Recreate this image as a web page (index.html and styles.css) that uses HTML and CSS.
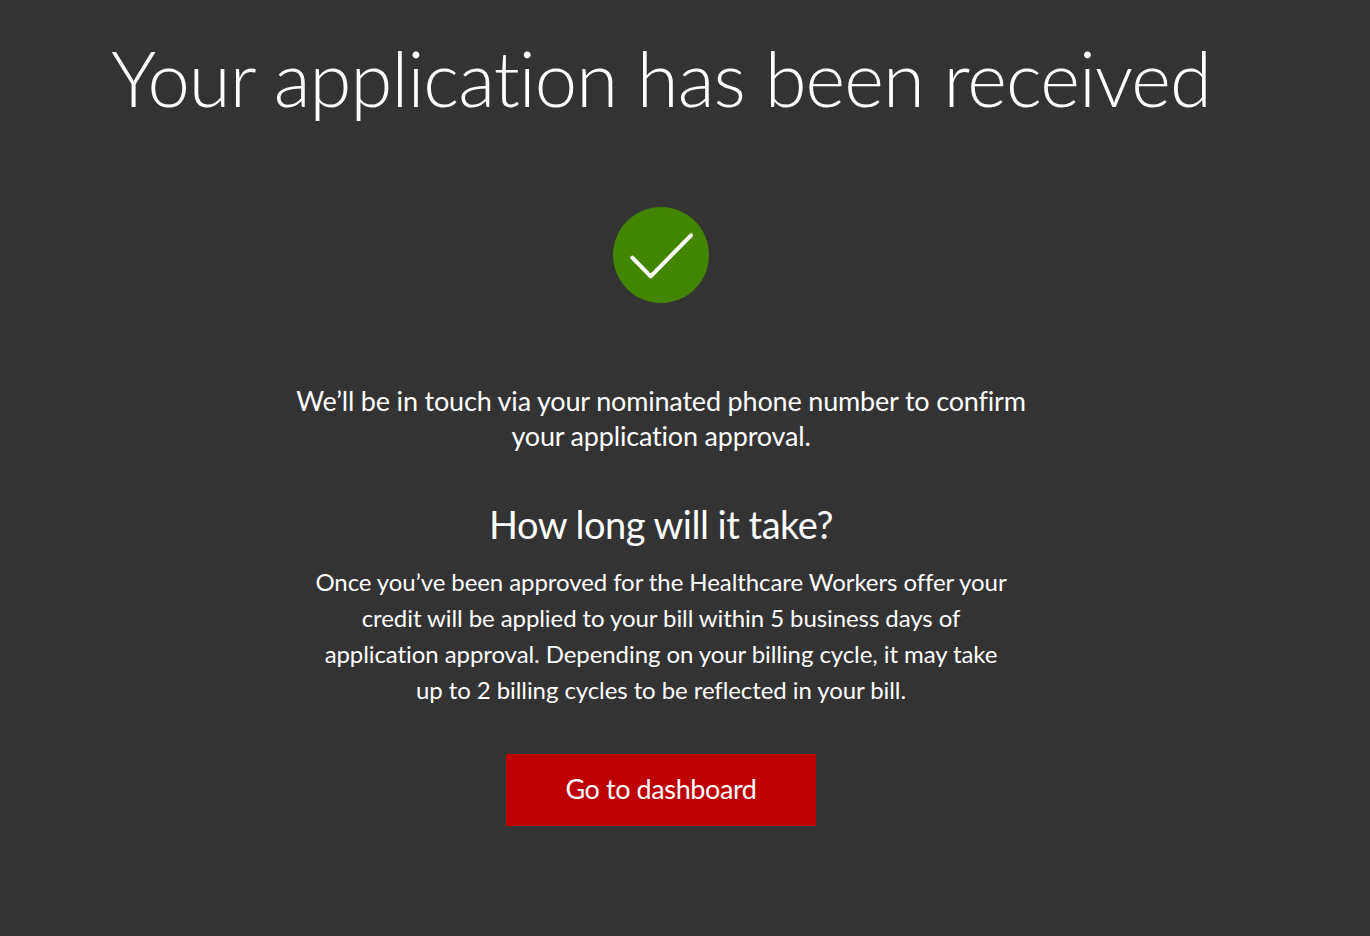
FILE: index.html
```html
<!DOCTYPE html>
<html lang="en">
<head>
<meta charset="utf-8">
<title>Application received</title>
<link rel="stylesheet" href="styles.css">
</head>
<body>
<main class="page">
  <h1 class="title">Your application has been received</h1>
  <div class="status">
    <svg class="tick" width="96" height="96" viewBox="0 0 96 96" aria-hidden="true">
      <circle cx="48" cy="48" r="48" fill="#428600"/>
      <path d="M19.3 50.7 L37.7 69.3 L78 28.3" fill="none" stroke="#fff" stroke-width="4" stroke-linecap="round" stroke-linejoin="round"/>
    </svg>
  </div>
  <p class="lead">We’ll be in touch via your nominated phone number to confirm<br>your application approval.</p>
  <h2 class="subtitle">How long will it take?</h2>
  <p class="body">Once you’ve been approved for the Healthcare Workers offer your<br>credit will be applied to your bill within 5 business days of<br>application approval. Depending on your billing cycle, it may take<br>up to 2 billing cycles to be reflected in your bill.</p>
  <a class="button" href="#">Go to dashboard</a>
</main>
</body>
</html>
```
FILE: styles.css
```css
html, body { margin: 0; padding: 0; height: 100%; }
body {
  background: #333;
  color: #fff;
  font-family: Lato, "Open Sans", sans-serif;
  font-variant-ligatures: none;
  overflow: hidden;
}
.page {
  width: 1322px;
  display: flex;
  flex-direction: column;
  align-items: center;
  text-align: center;
}
.title {
  margin: 28px 0 0;
  font-size: 76px;
  line-height: 100px;
  font-weight: 300;
  letter-spacing: -0.93px;
  white-space: nowrap;
}
.status { margin-top: 79px; height: 96px; }
.tick { display: block; }
.lead {
  margin: 80px 0 0;
  font-size: 27px;
  line-height: 35px;
  font-weight: 400;
  letter-spacing: -0.18px;
}
.subtitle {
  margin: 46px 0 0;
  font-size: 38px;
  line-height: 50px;
  font-weight: 400;
  letter-spacing: -0.5px;
}
.body {
  margin: 15px 0 0;
  font-size: 24px;
  line-height: 36px;
  letter-spacing: -0.08px;
}
.button {
  box-sizing: border-box;
  margin-top: 46px;
  width: 310px;
  height: 72px;
  padding-bottom: 3px;
  display: flex;
  align-items: center;
  justify-content: center;
  background: #bd0000;
  color: #fff;
  font-size: 27px;
  letter-spacing: -0.4px;
  text-decoration: none;
}
```
